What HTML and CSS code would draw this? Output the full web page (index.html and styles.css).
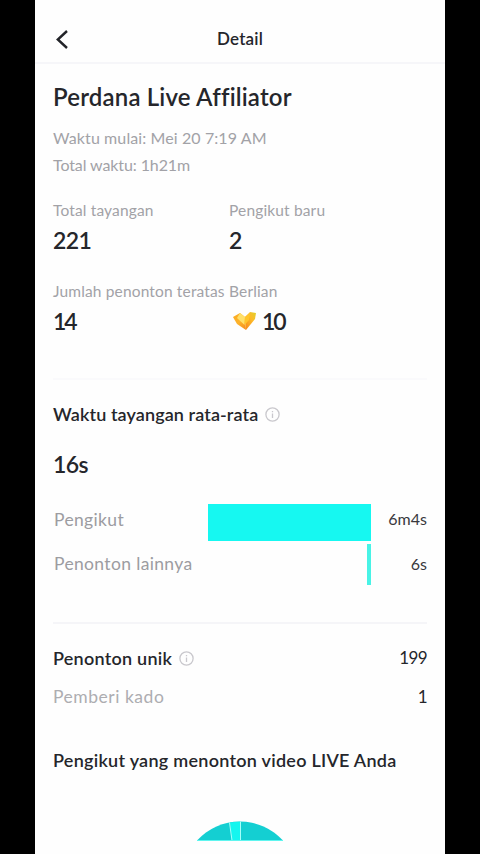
FILE: index.html
```html
<!DOCTYPE html>
<html lang="id">
<head>
<meta charset="utf-8">
<title>Detail</title>
<link rel="stylesheet" href="styles.css">
</head>
<body>
<main class="screen">
  <header class="topbar">
    <svg class="back" viewBox="0 0 14 20" width="14" height="20"><path d="M12 2 2.800 10.500 12 19"/></svg>
    <span class="topbar-title">Detail</span>
  </header>
  <section class="summary">
    <h1>Perdana Live Affiliator</h1>
    <p class="meta start">Waktu mulai: Mei 20 7:19 AM</p>
    <p class="meta total">Total waktu: 1h21m</p>
    <div class="stats">
      <div class="stat"><span class="label">Total tayangan</span><span class="value">221</span></div>
      <div class="stat"><span class="label">Pengikut baru</span><span class="value">2</span></div>
      <div class="stat"><span class="label">Jumlah penonton teratas</span><span class="value tight">14</span></div>
      <div class="stat"><span class="label">Berlian</span>
        <span class="value tight"><svg class="gem" width="25" height="20" viewBox="0 0 25 20">
          <defs>
            <linearGradient id="gl" x1="0" y1="0" x2="1" y2="1"><stop offset="0" stop-color="#f9a91f"/><stop offset=".5" stop-color="#fdb32b"/><stop offset="1" stop-color="#f48a1c"/></linearGradient>
            <linearGradient id="gr" x1="1" y1="0" x2="0" y2="1"><stop offset="0" stop-color="#dfd12b"/><stop offset=".4" stop-color="#fdb928"/><stop offset="1" stop-color="#f6861a"/></linearGradient>
          </defs>
          <path d="M1 6 8 2 13 6 14 19 5 13Z" fill="url(#gl)"/>
          <path d="M13 6 18 1 24 2 23 8 14 19Z" fill="url(#gr)"/>
          <path d="M8 2 13 6 12.500 14 5 7Z" fill="#ffe06a"/>
          <path d="M13 6 18 2 17 9 12.500 14Z" fill="#ffc52b"/>
        </svg>10</span></div>
    </div>
  </section>
  <section class="average">
    <h2>Waktu tayangan rata-rata<svg class="info" width="15" height="15" viewBox="0 0 15 15"><circle cx="7.500" cy="7.500" r="6.600"/><path d="M7.500 6.600V11M7.500 3.900V5.300"/></svg></h2>
    <p class="value average-value">16s</p>
    <div class="bar-row"><span class="name">Pengikut</span><span class="track"><span class="bar follower"></span></span><span class="time">6m4s</span></div>
    <div class="bar-row second"><span class="name">Penonton lainnya</span><span class="track"><span class="bar other"></span></span><span class="time">6s</span></div>
  </section>
  <section class="unique">
    <div class="row"><h2>Penonton unik<svg class="info" width="15" height="15" viewBox="0 0 15 15"><circle cx="7.500" cy="7.500" r="6.600"/><path d="M7.500 6.600V11M7.500 3.900V5.300"/></svg></h2><span class="count">199</span></div>
    <div class="row"><span class="name">Pemberi kado</span><span class="count">1</span></div>
    <h2 class="followers">Pengikut yang menonton video LIVE Anda</h2>
    <svg class="pie" width="90" height="20" viewBox="0 0 90 20">
      <path d="M2 19.500A58 58 0 0 1 88 19.500Z" fill="#14cfd2"/>
      <path d="M35 1.600A58 58 0 0 1 45.500 .8V19.500H37Z" fill="#14f6ef"/>
      <path d="M34.500 1.500 37 19.500M45.500 .5V19.500" stroke="#a5fffa" fill="none"/>
      <path d="M2 19.500H88" stroke="#5ff5ef"/>
    </svg>
  </section>
</main>
</body>
</html>
```
FILE: styles.css
```css
* { box-sizing: border-box; }
body { margin: 0; background: #000; font-family: Lato, "Liberation Sans", sans-serif; color: #25262b; font-variant-ligatures: none; }
h1, h2, p { margin: 0; }
.screen { width: 410px; height: 854px; margin: 0 auto; background: #fefefe; overflow: hidden; }
.topbar { height: 64px; padding: 15px 20px 0; display: grid; grid-template-columns: 14px 1fr 14px; align-items: center; border-bottom: 2px solid #f6f6f9; }
.back { fill: none; stroke: #222328; stroke-width: 2.4; }
.topbar-title { text-align: center; font-size: 17px; font-weight: 600; line-height: 20px; letter-spacing: .2px; }
.summary { height: 314px; padding: 18px 18px 0; }
h1 { font-size: 24px; line-height: 30px; font-weight: 600; white-space: nowrap; letter-spacing: .18px; }
.meta { font-size: 16px; line-height: 27px; color: #a2a2a7; letter-spacing: .1px; }
.total { letter-spacing: -.1px; }
.start { margin-top: 12px; }
.stats { display: grid; grid-template-columns: 176px 1fr; grid-auto-rows: 81px; margin-top: 21px; }
.stat { display: flex; flex-direction: column; }
.label { font-size: 15.5px; line-height: 22px; color: #a2a2a7; white-space: nowrap; letter-spacing: .15px; }
.value { font-size: 23px; line-height: 30px; margin-top: 4px; font-weight: 600; display: flex; align-items: center; letter-spacing: -.6px; }
.tight { letter-spacing: -2px; }
.gem { margin: -1px 5px 0 3px; }
.average { height: 244px; padding: 0 18px; }
.average::before, .unique::before { content: ""; display: block; height: 2px; background: #fafafc; }
.average h2 { margin-top: 22px; }
h2 { font-size: 18px; line-height: 24px; font-weight: 600; display: flex; align-items: center; white-space: nowrap; letter-spacing: .1px; }
.info { margin: 1px 0 0 7px; fill: none; stroke: #c9c8cd; stroke-width: 1.3; }
.average-value { margin-top: 23px; margin-bottom: 25px; }
.bar-row { height: 37px; display: grid; grid-template-columns: 155px 163px 1fr; }
.second { height: 41px; margin-top: 3px; }
.name { font-size: 17.5px; color: #9c9ca1; line-height: 31px; white-space: nowrap; padding-left: 1px; letter-spacing: .35px; }
.second .name, .second .time { line-height: 39px; }
.track { display: flex; justify-content: flex-end; }
.follower { width: 163px; background: #16f8f1; }
.other { width: 4px; background: #48f3e6; }
.time { text-align: right; font-size: 16px; line-height: 30px; color: #38383d; }
.unique { padding: 0 18px; }
.unique::before { background: #f5f5f8; margin-bottom: -1px; }
.row { display: flex; justify-content: space-between; align-items: center; height: 39px; }
.row .name { padding: 0; color: #adadb1; letter-spacing: .52px; }
.row h2 { letter-spacing: .25px; }
.count { font-size: 17px; letter-spacing: -.6px; }
.unique .row:first-child { margin-top: 15px; }
.followers { margin-top: 32px; letter-spacing: .27px; }
.pie { display: block; margin: 49px auto 0; }
```
